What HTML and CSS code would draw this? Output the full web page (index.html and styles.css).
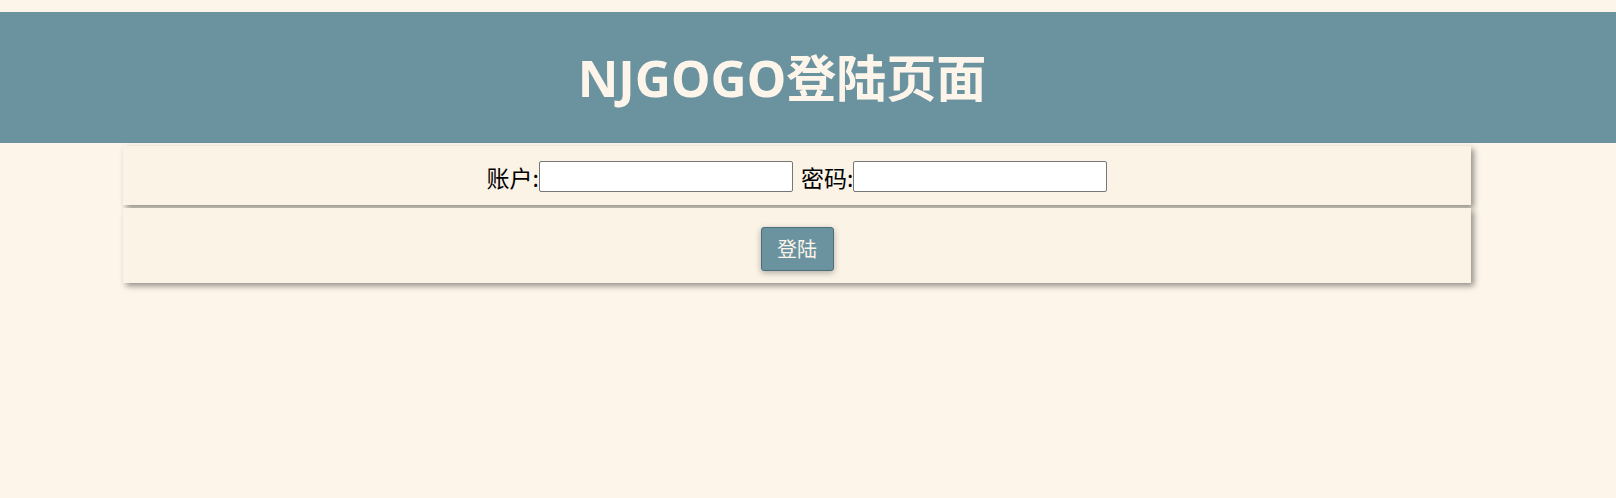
FILE: index.html
```html
<!DOCTYPE html>
<html lang="zh">
<head>
<meta charset="utf-8">
<title>NJGOGO登陆页面</title>
<link rel="stylesheet" href="styles.css">
</head>
<body>
<header class="site-header">
  <h1 class="site-title">NJGOGO登陆页面</h1>
</header>
<main class="login">
  <form class="login-form">
    <div class="panel panel-fields">
      <label class="field">账户:<input class="text-input" type="text" name="user"></label>
      <label class="field">密码:<input class="text-input" type="password" name="pwd"></label>
    </div>
    <div class="panel panel-actions">
      <button class="btn" type="button">登陆</button>
    </div>
  </form>
</main>
</body>
</html>
```

FILE: styles.css
```css
html {
  background: #fdf5ea;
}
body {
  margin: 0;
  padding: 12px 0 40px;
  min-height: 100vh;
  box-sizing: border-box;
  font-family: "Noto Sans", "Noto Sans CJK SC", sans-serif;
  color: #000;
}
.site-header {
  background: #6a929f;
  height: 131px;
  display: flex;
  align-items: center;
  justify-content: center;
  padding-right: 52px;
}
.site-title {
  margin: 0;
  color: #fdf5ea;
  font-size: 50px;
  font-weight: 700;
  line-height: 1;
}
.login {
  padding: 3px 145px 20px 123px;
}
.login-form {
  display: flex;
  flex-direction: column;
  gap: 3px;
}
.panel {
  background: #fbf3e6;
  box-shadow: 3px 3px 6px rgba(0, 0, 0, 0.42);
  display: flex;
  justify-content: center;
  align-items: center;
}
.panel-fields {
  height: 59px;
  gap: 8px;
  padding-top: 2px;
  box-sizing: border-box;
  font-family: "Noto Sans CJK SC", sans-serif;
  font-size: 23px;
}
.field {
  display: flex;
  align-items: center;
}
.text-input {
  width: 254px;
  height: 31px;
  box-sizing: border-box;
  margin: 0;
  border: 1px solid #767676;
  border-radius: 2px;
  background: #fff;
  padding: 1px 2px;
  font-size: 14px;
}
.panel-actions {
  height: 75px;
  padding-top: 6px;
  box-sizing: border-box;
}
.btn {
  width: 73px;
  height: 44px;
  box-sizing: border-box;
  background: #6a929f;
  color: #fdf5ea;
  border: 1px solid #4b6f7b;
  border-radius: 3px;
  font-family: "Noto Sans CJK SC", sans-serif;
  font-size: 20px;
  padding: 0;
  box-shadow: 0 2px 6px rgba(0, 0, 0, 0.3);
}
```
